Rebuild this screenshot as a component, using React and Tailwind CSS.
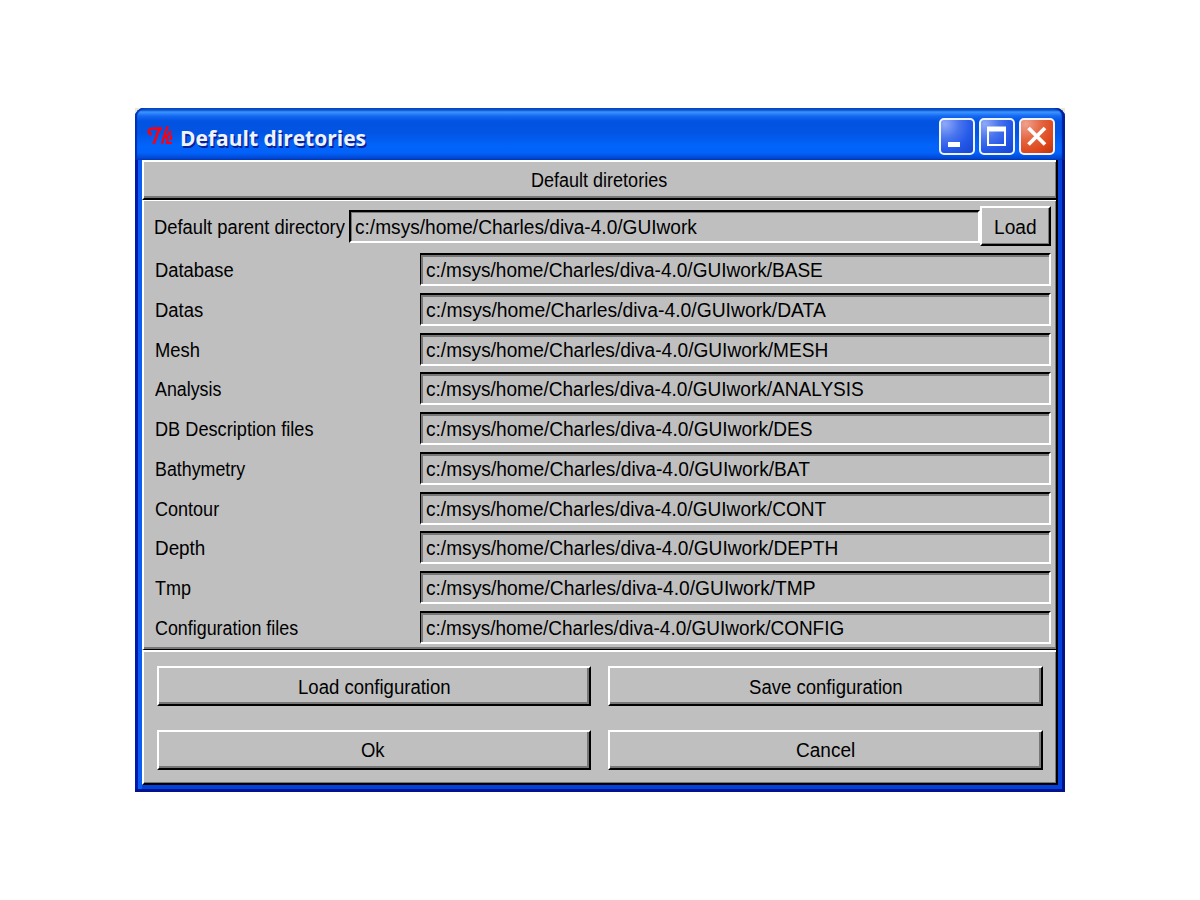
import { useLayoutEffect, useRef, useState } from "react";

const ROWS = [
  ["Database", 79, "BASE", 397],
  ["Datas", 48, "DATA", 400],
  ["Mesh", 45, "MESH", 402],
  ["Analysis", 66, "ANALYSIS", 438],
  ["DB Description files", 159, "DES", 387],
  ["Bathymetry", 90, "BAT", 384],
  ["Contour", 64, "CONT", 400],
  ["Depth", 50, "DEPTH", 412],
  ["Tmp", 36, "TMP", 390],
  ["Configuration files", 143, "CONFIG", 418],
];

// Bitmap-like label: condenses its text to a fixed pixel width.
function Label({ children, width, className = "" }) {
  const ref = useRef(null);
  const [scale, setScale] = useState(1);
  useLayoutEffect(() => {
    setScale(width / ref.current.offsetWidth);
  }, [width]);
  return (
    <span className={`block shrink-0 whitespace-nowrap ${className}`} style={{ width }}>
      <span ref={ref} className="inline-block origin-left" style={{ transform: `scaleX(${scale})` }}>
        {children}
      </span>
    </span>
  );
}

function Field({ children, width, className = "" }) {
  return (
    <div className={`flex items-center border-t-2 border-r-2 border-b-2 border-t-black border-r-white border-b-white ${className}`}>
      <Label width={width} className="pt-px">{children}</Label>
    </div>
  );
}

function Button({ children, width, className = "" }) {
  return (
    <button
      className={`flex items-center justify-center border-2 border-t-white border-r-black border-b-black border-l-white ${className}`}
    >
      <Label width={width}>{children}</Label>
    </button>
  );
}

function Tk() {
  return (
    <svg className="mt-[2px] mr-[7px] h-[22px] w-[26px] shrink-0" viewBox="0 0 26 22" fill="none" stroke="#fa0010">
      <path d="M5 8 H3 L1.5 6 L2 4 L5 2.5 H15" strokeWidth="2.4" />
      <path d="M13.5 2 L10.5 7 L9 12 L6.5 18" strokeWidth="2.6" />
      <path d="M21 0 L18.5 6 L16.5 12 L15 18" strokeWidth="2.2" />
      <path d="M24 5 L21 9 L17 12" strokeWidth="2.4" />
      <path d="M18.5 11 L21 13 L20 17 L25 17 M24 9 V14" strokeWidth="2.2" />
    </svg>
  );
}

function TitleButton({ red, children }) {
  return (
    <button
      className={`flex h-[37px] w-[36px] items-center justify-center rounded-[5px] border-2 border-[#eef4ff] ${
        red
          ? "bg-[radial-gradient(circle_at_15%_12%,#f0a08c_0%,#e4643f_40%,#dc4519_75%,#b83510_100%)]"
          : "bg-[radial-gradient(circle_at_12%_12%,#8fa9f8_0%,#4975ee_35%,#2458e8_65%,#1746cf_100%)]"
      }`}
    >
      <svg viewBox="0 0 32 32" className="h-[32px] w-[32px] shrink-0" fill="none" stroke="white">
        {children}
      </svg>
    </button>
  );
}

export default function App() {
  return (
    <div className="flex h-[900px] w-[1200px] items-start bg-white pt-[108px] pl-[135px] font-['Liberation_Sans',sans-serif] text-[20px] leading-[24px] text-black">
      <div className="h-[684px] w-[930px] bg-[#ece9d8]">
        <div className="flex h-full flex-col rounded-t-[9px] bg-[#0242da] shadow-[inset_-3px_-3px_0_#00138c,inset_3px_0_0_#0019b0,inset_7px_0_0_#0b5cf0]">
          <div className="flex h-[52px] shrink-0 items-center rounded-t-[9px] bg-[linear-gradient(180deg,#0a50c8_0px,#0a50c8_2px,#3d95ff_4px,#1469f2_8px,#0353e2_13px,#0254e3_24px,#0264fb_38px,#0261f8_45px,#0048d4_50px,#0038b8_52px)] pt-[4px] pr-[10px] pl-[12px] shadow-[inset_-3px_0_1px_#0020a0,inset_2px_0_1px_#0030b8]">
            <Tk />
            <Label
              width={186}
              className="pt-px font-['Open_Sans',sans-serif] text-[22px] leading-[28px] font-bold text-[#eef4ff] [text-shadow:1.5px_1.5px_0_#0a2094]"
            >
              Default diretories
            </Label>
            <div className="ml-auto flex gap-[4px]">
              <TitleButton>
                <path d="M7 24.5 H19" strokeWidth="5" />
              </TitleButton>
              <TitleButton>
                <path d="M6 9 H25" strokeWidth="5" />
                <path d="M7 9 V25 H24 V9" strokeWidth="2" />
              </TitleButton>
              <TitleButton red>
                <path d="M7.5 8 L24 24.5 M24 8 L7.5 24.5" strokeWidth="3.8" />
              </TitleButton>
            </div>
          </div>

          <div className="ml-[7px] h-[625px] w-[916px] border-r-2 border-r-black bg-[#bfbfbf]">
            <div className="flex h-[40px] items-center justify-center border-t-2 border-b-2 border-l-2 border-t-white border-b-black border-l-white pr-[2px] shadow-[inset_-1px_-2px_0_#777777]">
              <Label width={136}>Default diretories</Label>
            </div>

            <div className="h-[450px] border-t border-b border-l-2 border-t-white border-b-black border-l-white pt-[5px] pl-[10px] shadow-[inset_-1px_-2px_0_#777777]">
              <div className="flex h-[40px] items-center">
                <Label width={191} className="mr-[4px] pt-px">
                  Default parent directory
                </Label>
                <Field
                  width={342}
                  className="h-[33px] w-[631px] border-r-0 border-l-2 border-l-black pl-[4px] shadow-[inset_1px_1px_0_#777777]"
                >
                  c:/msys/home/Charles/diva-4.0/GUIwork
                </Field>
                <Button width={43} className="h-[40px] w-[71px] pt-px shadow-[inset_-1px_-1px_0_#777777]">
                  Load
                </Button>
              </div>
              <div className="mt-[7px] flex flex-col gap-[6.75px]">
                {ROWS.map(([name, nameWidth, dir, pathWidth]) => (
                  <div key={name} className="flex h-[33px] items-center">
                    <div className="w-[266px] shrink-0 pl-[0.5px]">
                      <Label width={nameWidth} className="pt-px">{name}</Label>
                    </div>
                    <Field
                      width={pathWidth}
                      className="h-[33px] w-[631px] border-l border-l-black pl-[5px] shadow-[inset_2px_2px_0_#777777]"
                    >
                      {"c:/msys/home/Charles/diva-4.0/GUIwork/" + dir}
                    </Field>
                  </div>
                ))}
              </div>
            </div>

            <div className="grid h-[135px] grid-cols-[434px_435px] content-start gap-x-[17px] gap-y-[24px] border-t-2 border-b-2 border-l-2 border-t-white border-b-black border-l-white pt-[14px] pl-[13px] shadow-[inset_-1px_-1px_0_#777777]">
              <Button width={153} className="h-[40px] pt-[2px] shadow-[inset_-2px_-2px_0_#777777]">Load configuration</Button>
              <Button width={154} className="h-[40px] pt-[2px] shadow-[inset_-2px_-2px_0_#777777]">Save configuration</Button>
              <Button width={24} className="h-[40px] pr-[2px] shadow-[inset_-2px_-2px_0_#777777]">Ok</Button>
              <Button width={59} className="h-[40px] shadow-[inset_-2px_-2px_0_#777777]">Cancel</Button>
            </div>
          </div>
        </div>
      </div>
    </div>
  );
}
